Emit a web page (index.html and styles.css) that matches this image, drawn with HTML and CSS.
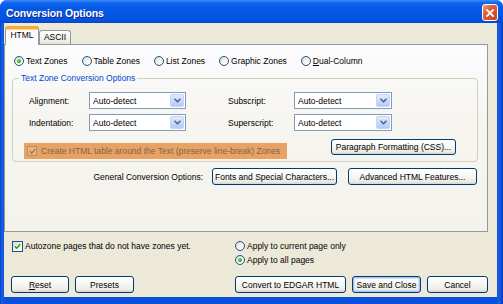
FILE: index.html
```html
<!DOCTYPE html>
<html lang="en">
<head>
    <meta charset="UTF-8">
    <title>Conversion Options</title>
    <link rel="stylesheet" href="styles.css">
</head>
<body>
    <div class="window">
        <div class="titlebar">
            <span class="title">Conversion Options</span>
            <span class="close-btn">
                <svg width="8" height="8" viewBox="0 0 8 8">
                    <path d="M1 1 L7 7 M7 1 L1 7" stroke="#fff" stroke-width="1.8" stroke-linecap="square"/>
                </svg>
            </span>
        </div>

        <div class="client">
            <div class="tabs">
                <div class="tab active">HTML</div>
                <div class="tab tab-ascii">ASCII</div>
            </div>

            <div class="panel">
                <div class="zone-row">
                    <label class="radio"><span class="radio-dot checked"></span>Text Zones</label>
                    <label class="radio"><span class="radio-dot"></span>Table Zones</label>
                    <label class="radio"><span class="radio-dot"></span>List Zones</label>
                    <label class="radio"><span class="radio-dot"></span>Graphic Zones</label>
                    <label class="radio"><span class="radio-dot"></span><span><u>D</u>ual-Column</span></label>
                </div>

                <fieldset class="group">
                    <legend>Text Zone Conversion Options</legend>

                    <div class="field-row">
                        <span class="field-label">Alignment:</span>
                        <div class="combo">
                            <span class="combo-text">Auto-detect</span>
                            <span class="combo-btn">
                                <svg width="7" height="5" viewBox="0 0 7 5"><path d="M0.5 0.8 L3.5 3.8 L6.5 0.8" fill="none" stroke="#4d6185" stroke-width="1.5"/></svg>
                            </span>
                        </div>
                        <span class="field-label wide">Subscript:</span>
                        <div class="combo combo-right">
                            <span class="combo-text">Auto-detect</span>
                            <span class="combo-btn">
                                <svg width="7" height="5" viewBox="0 0 7 5"><path d="M0.5 0.8 L3.5 3.8 L6.5 0.8" fill="none" stroke="#4d6185" stroke-width="1.5"/></svg>
                            </span>
                        </div>
                    </div>

                    <div class="field-row second">
                        <span class="field-label">Indentation:</span>
                        <div class="combo">
                            <span class="combo-text">Auto-detect</span>
                            <span class="combo-btn">
                                <svg width="7" height="5" viewBox="0 0 7 5"><path d="M0.5 0.8 L3.5 3.8 L6.5 0.8" fill="none" stroke="#4d6185" stroke-width="1.5"/></svg>
                            </span>
                        </div>
                        <span class="field-label wide">Superscript:</span>
                        <div class="combo combo-right">
                            <span class="combo-text">Auto-detect</span>
                            <span class="combo-btn">
                                <svg width="7" height="5" viewBox="0 0 7 5"><path d="M0.5 0.8 L3.5 3.8 L6.5 0.8" fill="none" stroke="#4d6185" stroke-width="1.5"/></svg>
                            </span>
                        </div>
                    </div>

                    <div class="option-row">
                        <label class="check-band">
                            <span class="box box-muted">
                                <svg width="7" height="7" viewBox="0 0 7 7"><path d="M0.8 3.3 L2.7 5.2 L6.2 1.3" fill="none" stroke="#a87c52" stroke-width="1.5"/></svg>
                            </span>
                            Create HTML table around the Text (preserve line-break) Zones
                        </label>
                        <button class="btn btn-paragraph">Paragraph Formatting (CSS)...</button>
                    </div>
                </fieldset>

                <div class="general-row">
                    <span class="general-label">General Conversion Options:</span>
                    <button class="btn btn-fonts">Fonts and Special Characters...</button>
                    <button class="btn btn-advanced">Advanced HTML Features...</button>
                </div>
            </div>

            <div class="footer-options">
                <label class="check">
                    <span class="box">
                        <svg width="7" height="7" viewBox="0 0 7 7"><path d="M0.8 3.3 L2.7 5.2 L6.2 1.3" fill="none" stroke="#21a121" stroke-width="1.6"/></svg>
                    </span>
                    Autozone pages that do not have zones yet.
                </label>
                <div class="apply-group">
                    <label class="radio"><span class="radio-dot"></span>Apply to current page only</label>
                    <label class="radio"><span class="radio-dot checked"></span>Apply to all pages</label>
                </div>
            </div>

            <div class="footer-buttons">
                <button class="btn btn-reset"><u>R</u>eset</button>
                <button class="btn btn-presets">Presets</button>
                <button class="btn btn-convert push">Convert to EDGAR HTML</button>
                <button class="btn btn-save focused">Save and Close</button>
                <button class="btn btn-cancel">Cancel</button>
            </div>
        </div>
    </div>
</body>
</html>
```

FILE: styles.css
```css
* {
    box-sizing: border-box;
    margin: 0;
    padding: 0;
}

body {
    font-family: "Liberation Sans", Arial, sans-serif;
    font-size: 8.5px;
    color: #000;
    background: #ffffff;
}

/* window frame */
.window {
    width: 503px;
    height: 304px;
    display: flex;
    flex-direction: column;
    background: linear-gradient(to right, #0a3fc2 0, #1662ea 2px, #0b50dc 4px, #0b50dc 497px, #1a5fe6 499px, #0a3bb8 503px);
    border-radius: 7px 7px 0 0;
    overflow: hidden;
}

.titlebar {
    height: 23px;
    display: flex;
    align-items: flex-start;
    padding: 0 5px 0 6px;
    background: linear-gradient(to bottom, #3d8ff7 0, #0f63ec 3px, #0659e8 8px, #0455e4 16px, #0550dc 21px, #0744c4 23px);
}

.title {
    margin-top: 7px;
    line-height: 12px;
    font-size: 10.5px;
    font-weight: bold;
    letter-spacing: -0.15px;
    color: #fff;
    text-shadow: 1px 1px 0 #0b2a8a;
}

.close-btn {
    margin: 4px 0 0 auto;
    width: 16px;
    height: 17px;
    border: 1px solid #fff;
    border-radius: 3px;
    background: linear-gradient(135deg, #f0a080 0, #e0603a 35%, #c9431e 100%);
    display: flex;
    align-items: center;
    justify-content: center;
}

.client {
    flex: 1;
    margin: 0 6px 7px 4px;
    background: #ece9d8;
    display: flex;
    flex-direction: column;
}

/* tabs */
.tabs {
    display: flex;
    align-items: flex-end;
    height: 21px;
    padding: 3px 0 0 1px;
}

.tab {
    width: 32px;
    height: 14px;
    line-height: 12px;
    text-align: center;
    border: 1px solid #919b9c;
    border-bottom: none;
    border-radius: 3px 3px 0 0;
    background: linear-gradient(#ffffff, #f0efe9 70%, #e6e4dc);
}

.tab.active {
    width: 34px;
    height: 19px;
    margin-bottom: -1px;
    position: relative;
    z-index: 1;
    line-height: 13px;
    border-top: 3px solid #f5a936;
    background: #fcfcfe;
    box-shadow: inset 0 1px 0 #ffd67a;
}

/* tab page */
.panel {
    height: 188px;
    margin-right: 9px;
    border: 1px solid #919b9c;
    background: linear-gradient(#fcfcfe, #f6f5f0 40%, #f3f2ec);
    display: flex;
    flex-direction: column;
}

.zone-row {
    display: flex;
    align-items: center;
    gap: 14px;
    height: 12px;
    margin: 10px 0 0 9px;
}

.radio {
    display: flex;
    align-items: center;
    gap: 2px;
    height: 12px;
    white-space: nowrap;
}

.radio-dot {
    width: 10px;
    height: 10px;
    flex-shrink: 0;
    border: 1px solid #1c5180;
    border-radius: 50%;
    background: linear-gradient(135deg, #dcdcd6, #f4f4f0 55%, #ffffff);
    display: flex;
    align-items: center;
    justify-content: center;
}

.radio-dot.checked::after {
    content: "";
    width: 4px;
    height: 4px;
    border-radius: 50%;
    background: radial-gradient(circle at 35% 35%, #6ee06e, #21a121 70%);
}

/* group box */
.group {
    margin: 6px 9px 0 7px;
    padding: 9px 0 2px 0;
    border: 1px solid #d0d0bf;
    border-radius: 4px;
}

.group legend {
    margin-left: 6px;
    padding: 0 2px;
    line-height: 10px;
    color: #0046d5;
}

.field-row {
    display: flex;
    align-items: center;
    height: 17px;
    padding-left: 16px;
}

.field-row.second {
    margin-top: 5px;
}

.field-label {
    width: 60px;
}

.field-label.wide {
    width: 66px;
    margin-left: 42px;
}

.combo {
    width: 97px;
    height: 17px;
    border: 1px solid #7f9db9;
    background: #fff;
    display: flex;
    align-items: center;
    padding: 1px;
}

.combo-right {
    width: 98px;
}

.combo-text {
    padding-left: 2px;
}

.combo-btn {
    margin-left: auto;
    width: 14px;
    height: 13px;
    border: 1px solid #c3d3fd;
    border-radius: 2px;
    background: linear-gradient(#e3ebfe, #c6d6fb 60%, #b7cbf7);
    display: flex;
    align-items: center;
    justify-content: center;
}

.option-row {
    display: flex;
    align-items: flex-start;
    margin-top: 8px;
    padding-left: 11px;
}

.check-band {
    margin-top: 4px;
    width: 263px;
    height: 16px;
    display: flex;
    align-items: center;
    gap: 4px;
    padding-left: 3px;
    background: #e8a263;
    color: #82644a;
    white-space: nowrap;
}

.box {
    width: 11px;
    height: 11px;
    flex-shrink: 0;
    border: 1px solid #1c5180;
    background: linear-gradient(135deg, #dcdcd6, #f4f4f0 55%, #ffffff);
    display: flex;
    align-items: center;
    justify-content: center;
}

.box-muted {
    width: 10px;
    height: 10px;
    border-color: #b88e66;
    background: #eeb27a;
}

/* buttons */
.btn {
    height: 17px;
    font-family: inherit;
    font-size: 8.5px;
    color: #000;
    border: 1px solid #003c74;
    border-radius: 3px;
    background: linear-gradient(#ffffff, #f7f7f4 45%, #eceae3 85%, #d8d3c8);
    white-space: nowrap;
}

.btn.focused {
    box-shadow: inset 0 0 0 1px #a8c4f0, inset 0 0 0 2px #cedcf6;
}

.btn-paragraph {
    width: 125px;
    height: 16px;
    margin-left: 44px;
}

.general-row {
    display: flex;
    align-items: center;
    justify-content: flex-end;
    height: 17px;
    margin-top: 6px;
    padding-right: 10px;
}

.general-label {
    margin-right: 9px;
}

.btn-fonts {
    width: 125px;
}

.btn-advanced {
    width: 129px;
    margin-left: 11px;
}

/* below the tab page */
.footer-options {
    display: flex;
    padding-top: 8px;
}

.check {
    display: flex;
    align-items: center;
    gap: 2px;
    height: 12px;
    margin-left: 8px;
}

.apply-group {
    margin: 0 9px 0 auto;
    width: 253px;
    display: flex;
    flex-direction: column;
    gap: 2px;
}

.footer-buttons {
    display: flex;
    gap: 6px;
    margin-top: 10px;
    padding: 0 9px 0 7px;
}

.btn-reset { width: 58px; }
.btn-presets { width: 59px; }
.btn-convert { width: 111px; }
.btn-save { width: 69px; }
.btn-cancel { width: 61px; }

.push {
    margin-left: auto;
}
```
